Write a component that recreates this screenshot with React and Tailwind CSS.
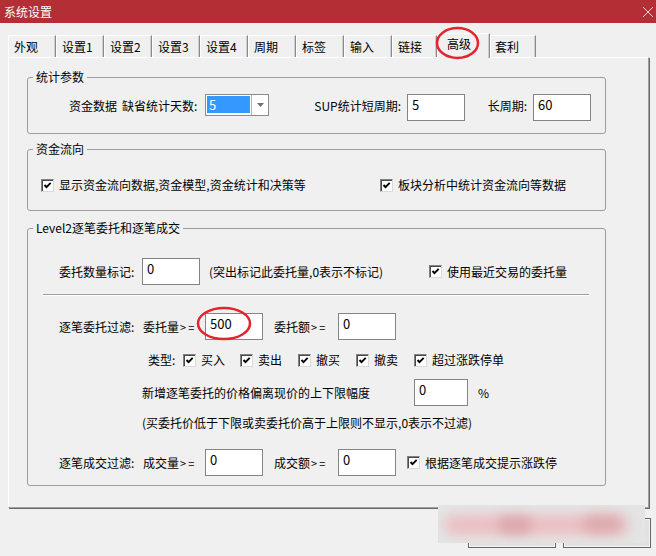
import React from "react";

function Cb() {
  return (
    <span className="inline-flex h-[13px] w-[13px] shrink-0 items-center justify-center border border-t-[#808080] border-l-[#808080] border-r-[#dadada] border-b-[#dadada] bg-white shadow-[inset_1px_1px_0_#4a4a4a]">
      <svg width="11" height="11" viewBox="0 0 11 11">
        <path d="M2.5 5 L4.5 7.2 L8.7 2.8" stroke="#000" strokeWidth="1.9" fill="none" />
      </svg>
    </span>
  );
}

function Inp({ v, wide }) {
  return (
    <div
      className={
        wide
          ? "h-[27px] w-[54px] shrink-0 border border-[#848484] bg-white pl-[4px] pt-[2px] text-[13px] leading-[16px]"
          : "h-[27px] w-[58px] shrink-0 border border-[#848484] bg-white pl-[4px] pt-[2px] text-[13px] leading-[16px]"
      }
    >
      {v}
    </div>
  );
}

function Tab({ label, w }) {
  return (
    <div
      className={
        w === 45
          ? "flex h-[22px] w-[45px] items-center border-t border-l border-r border-t-white border-l-white border-r-[#8a8a8a] pl-[5px] shadow-[inset_-1px_0_0_#cfcfcf]"
          : w === 46
          ? "flex h-[22px] w-[46px] items-center border-t border-l border-r border-t-white border-l-white border-r-[#8a8a8a] pl-[4px] shadow-[inset_-1px_0_0_#cfcfcf]"
          : "flex h-[22px] w-[48px] items-center border-t border-l border-r border-t-white border-l-white border-r-[#8a8a8a] pl-[5px] shadow-[inset_-1px_0_0_#cfcfcf]"
      }
    >
      {label}
    </div>
  );
}

function TypeItem({ label, first }) {
  return (
    <div className={first ? "flex w-[57px] items-center" : "flex w-[58px] items-center"}>
      <Cb />
      <span className="ml-[5px]">{label}</span>
    </div>
  );
}

function Ge({ text }) {
  return (
    <span className="w-[62px]">
      {text}
      <span className="ml-[1px] text-[11px]">&gt;</span>
      <span className="ml-[2px] text-[11px]">=</span>
    </span>
  );
}

export default function App() {
  return (
    <div className="relative h-[556px] w-[656px] overflow-hidden bg-[#f0f0f0] font-['Noto_Sans_CJK_SC',sans-serif] text-[12px] leading-[16px] whitespace-nowrap text-black">
      {/* title bar */}
      <div className="flex h-[23px] items-center justify-between bg-[#b32f35] pl-[4px] pr-[2px] text-white">
        <span>系统设置</span>
        <svg width="12" height="12" viewBox="0 0 12 12">
          <path d="M1 1 L11 11 M11 1 L1 11" stroke="#f3d4d5" strokeWidth="1" fill="none" />
        </svg>
      </div>

      {/* tabs */}
      <div className="flex h-[34px] items-end pl-[8px]">
        <Tab label="外观" w={48} />
        <Tab label="设置1" w={48} />
        <Tab label="设置2" w={48} />
        <Tab label="设置3" w={48} />
        <Tab label="设置4" w={48} />
        <Tab label="周期" w={48} />
        <Tab label="标签" w={48} />
        <Tab label="输入" w={48} />
        <Tab label="链接" w={45} />
        <div className="relative z-10 -mb-[1px] flex h-[25px] w-[53px] items-center border-t border-l border-r border-t-white border-l-white border-r-[#8a8a8a] bg-[#f0f0f0] pb-[4px] pl-[9px] shadow-[inset_-1px_0_0_#cfcfcf]">
          高级
        </div>
        <Tab label="套利" w={46} />
      </div>

      {/* panel */}
      <div className="ml-[8px] h-[451px] w-[641px] border border-t-white border-l-white border-r-[#a0a0a0] border-b-[#a0a0a0] shadow-[1px_1px_0_#696969]">
        {/* group 1 */}
        <div className="relative ml-[18px] mt-[19px] h-[57px] w-[579px] rounded-[3px] border border-[#9c9c9c]">
          <span className="absolute -top-[9px] left-[5px] bg-[#f0f0f0] px-[3px]">统计参数</span>
          <div className="ml-[41px] mt-[16px] flex items-start">
            <span className="mt-[4px] w-[136px]">
              资金数据<span className="ml-[5px]">缺省统计天数:</span>
            </span>
            <div className="flex h-[22px] w-[64px] shrink-0 border border-[#8c8c8c] bg-white">
              <div className="ml-[1px] mt-[1px] h-[17px] w-[43px] bg-[#3399ff] pl-[2px] text-[13px] leading-[17px] text-white">
                5
              </div>
              <div className="ml-auto flex h-full w-[17px] items-center justify-center border-l border-[#b4b4b4]">
                <svg width="7" height="4" viewBox="0 0 7 4">
                  <path d="M0 0 L7 0 L3.5 4 Z" fill="#707070" />
                </svg>
              </div>
            </div>
            <span className="mt-[4px] w-[138px] pr-[6px] text-right">SUP统计短周期:</span>
            <Inp v="5" />
            <span className="mt-[4px] w-[68px] pr-[6px] text-right">长周期:</span>
            <Inp v="60" />
          </div>
        </div>

        {/* group 2 */}
        <div className="relative ml-[18px] mt-[15px] h-[62px] w-[579px] rounded-[3px] border border-[#9c9c9c]">
          <span className="absolute -top-[9px] left-[5px] bg-[#f0f0f0] px-[3px]">资金流向</span>
          <div className="ml-[13px] mt-[27px] flex h-[16px] items-center">
            <div className="flex w-[339px] items-center">
              <Cb />
              <span className="ml-[5px]">显示资金流向数据,资金模型,资金统计和决策等</span>
            </div>
            <div className="flex items-center">
              <Cb />
              <span className="ml-[5px]">板块分析中统计资金流向等数据</span>
            </div>
          </div>
        </div>

        {/* group 3 */}
        <div className="relative ml-[18px] mt-[17px] h-[258px] w-[579px] rounded-[3px] border border-[#9c9c9c]">
          <span className="absolute -top-[9px] left-[5px] bg-[#f0f0f0] px-[3px]">Level2逐笔委托和逐笔成交</span>

          <div className="ml-[31px] mt-[29px] flex items-center">
            <span className="w-[83px]">委托数量标记:</span>
            <Inp v="0" />
            <span className="ml-[9px] w-[220px]">(突出标记此委托量,0表示不标记)</span>
            <Cb />
            <span className="ml-[5px]">使用最近交易的委托量</span>
          </div>

          <div className="ml-[15px] mt-[9px] h-[2px] w-[546px] border-t border-b border-t-[#a0a0a0] border-b-white" />

          <div className="ml-[31px] mt-[17px] flex items-center">
            <span className="w-[84px]">逐笔委托过滤:</span>
            <Ge text="委托量" />
            <Inp v="500" />
            <span className="ml-[11px] flex w-[64px]">
              <Ge text="委托额" />
            </span>
            <Inp v="0" />
          </div>

          <div className="ml-[120px] mt-[12px] flex h-[16px] items-center">
            <span className="w-[35px]">类型:</span>
            <TypeItem label="买入" first />
            <TypeItem label="卖出" />
            <TypeItem label="撤买" />
            <TypeItem label="撤卖" />
            <div className="flex items-center">
              <Cb />
              <span className="ml-[5px]">超过涨跌停单</span>
            </div>
          </div>

          <div className="ml-[114px] mt-[11px] flex items-center">
            <span className="w-[272px]">新增逐笔委托的价格偏离现价的上下限幅度</span>
            <Inp v="0" wide />
            <span className="ml-[10px]">%</span>
          </div>

          <div className="ml-[114px] mt-[9px]">(买委托价低于下限或卖委托价高于上限则不显示,0表示不过滤)</div>

          <div className="ml-[31px] mt-[18px] flex items-center">
            <span className="w-[84px]">逐笔成交过滤:</span>
            <Ge text="成交量" />
            <Inp v="0" />
            <span className="ml-[11px] flex w-[64px]">
              <Ge text="成交额" />
            </span>
            <Inp v="0" />
            <span className="ml-[11px] flex items-center">
              <Cb />
            </span>
            <span className="ml-[5px]">根据逐笔成交提示涨跌停</span>
          </div>
        </div>
      </div>

      {/* buttons */}
      <div className="mt-[10px] flex justify-end gap-[7px] pr-[5px]">
        <div className="h-[30px] w-[88px] border border-[#666666] bg-[#e1e1e1] shadow-[inset_0_0_0_1px_#f5f5f5]" />
        <div className="h-[30px] w-[88px] border border-[#666666] bg-[#e1e1e1] shadow-[inset_0_0_0_1px_#f5f5f5]" />
      </div>

      {/* blurred watermark overlay */}
      <div className="absolute left-[438px] top-[505px] h-[38px] w-[207px] overflow-hidden bg-[#e4e4e4]">
        <div className="absolute left-[6px] top-[10px] h-[20px] w-[185px] rounded-full bg-[#ecbfc3] blur-[6px]" />
        <div className="absolute left-[60px] top-[12px] h-[16px] w-[34px] rounded-full bg-[#d9a6ab] blur-[6px]" />
        <div className="absolute left-[145px] top-[11px] h-[16px] w-[38px] rounded-full bg-[#dba9ae] blur-[6px]" />
      </div>

      {/* red annotation ellipses */}
      <svg className="pointer-events-none absolute left-0 top-0 z-20" width="656" height="556" viewBox="0 0 656 556">
        <ellipse cx="457.5" cy="43" rx="20.5" ry="15" fill="none" stroke="#e4232b" strokeWidth="2.5" />
        <ellipse cx="224" cy="323.5" rx="26" ry="15.5" fill="none" stroke="#e4232b" strokeWidth="2.5" />
      </svg>
    </div>
  );
}
